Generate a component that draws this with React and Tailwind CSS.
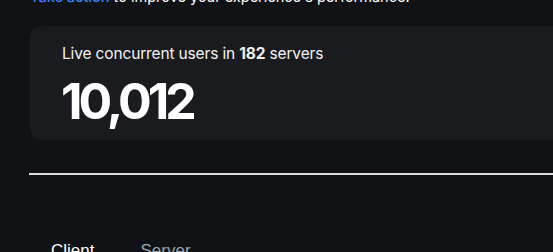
export default function App() {
	return (
		<div className="h-[252px] w-[553px] overflow-hidden bg-[#111216] font-['Inter',sans-serif] text-white">
			<div className="pl-[30px]">
				<p className="-mt-[12px] h-[18px] text-[14.5px] leading-[18px] whitespace-nowrap">
					<a className="text-[#3b82f6] font-medium">Take action</a> to improve your experience's performance.
				</p>

				<div className="mt-[20px] h-[114px] w-[560px] rounded-xl bg-[#1a1b1f] pl-[32px] pt-[16px]">
					<p className="text-[15.5px] leading-[24px] tracking-[-0.15px] text-[#f2f2f2]">
						Live concurrent users in <span className="font-bold">182</span> servers
					</p>
					<div className="mt-[10px] -ml-px text-[50px] font-bold leading-[50px] tracking-[-4px]">10,012</div>
				</div>

				<div className="mt-[33px] h-[2px] w-[560px] -ml-px bg-[#dcdcdc]" />

				<div className="mt-[66px] flex gap-[46px] pl-[21px] text-[17px] leading-[20px] font-['Liberation_Sans',sans-serif]">
					<span className="text-white">Client</span>
					<span className="text-[#9ca3af]">Server</span>
				</div>
			</div>
		</div>
	);
}
